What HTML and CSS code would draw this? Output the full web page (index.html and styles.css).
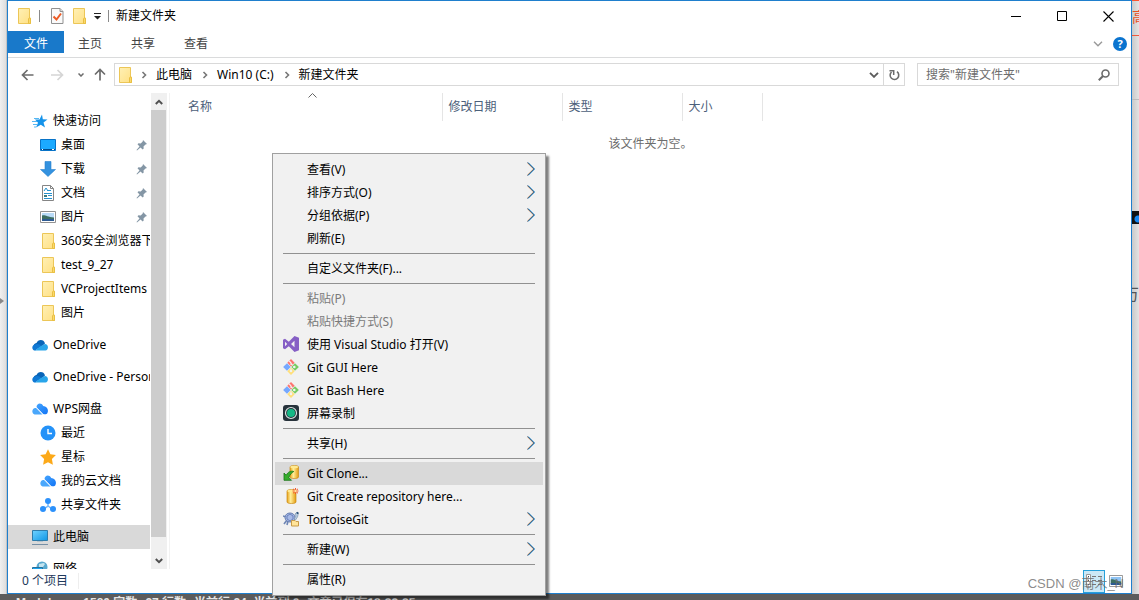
FILE: index.html
```html
<!DOCTYPE html>
<html lang="zh-CN">
<head>
<meta charset="utf-8">
<title>新建文件夹</title>
<link rel="stylesheet" href="styles.css">
</head>
<body>
<svg class="defs" aria-hidden="true">
  <defs>
    <linearGradient id="gf" x1="0" y1="0" x2="1" y2="1"><stop offset="0" stop-color="#fff0b5"/><stop offset="1" stop-color="#ffe083"/></linearGradient>
    <linearGradient id="gs" x1="0" y1="0" x2="1" y2="1"><stop offset="0" stop-color="#6fd2ff"/><stop offset="1" stop-color="#0e97e6"/></linearGradient>
    <linearGradient id="gw" x1="0" y1="0" x2="1" y2="1"><stop offset="0" stop-color="#45a5ff"/><stop offset="1" stop-color="#1173f5"/></linearGradient>
    <linearGradient id="gy" x1="0" y1="0" x2="1" y2="0"><stop offset="0" stop-color="#e8a21a"/><stop offset=".4" stop-color="#ffee9a"/><stop offset="1" stop-color="#e49b10"/></linearGradient>
    <symbol id="folder" viewBox="0 0 16 16"><path d="M2.500.5h11v9.500h1v5.500h-12z" fill="url(#gf)" stroke="#ecc657"/><path d="M12.500 15V11l1-1.500 1 1.500v4.500h-2z" fill="#fbd96b" stroke="#e9bf43"/></symbol>
    <symbol id="pin" viewBox="0 0 12 12"><path d="M7 1l4 4-1.500.5-2 2 .2 2-1 1-2.200-2L1 11.500l-.5-.5 3-3.500-2-2.200 1-1.100 2.200.2 2-2z" fill="#8496a5"/></symbol>
    <symbol id="cloud" viewBox="0 0 16 12"><path d="M3 10C0 8 2 4 4.500 4 6 0 12 0 13 4.500L9 8z" fill="#0864b8"/><path d="M3.500 11.500C-1 11.500-.5 5.500 3.500 5.500 5 4.500 8 5.200 9 7l-5 4z" fill="#0f78d4"/><path d="M3 11.500C5 10 8 7 10 6.500c1-.5 3-2.500 4.500-1 2.500 1.500 1.500 6-1 6z" fill="#28a5ea"/></symbol>
    <symbol id="wps" viewBox="0 0 16 12"><path d="M4.500 4C4.800.5 9-1 11.200 3c3.800.3 6 4 4 7.500-2 1.500-4 .8-5.200-.5L5.500 5.200z" fill="url(#gw)"/><path d="M1 10.500C-.8 8 1.200 4.300 4 5c1.500.4 2.500 2.500 6.500 6.500H2.500z" fill="#4aa7fb"/><path d="M4.300 4.700l6 6" stroke="#fff" stroke-width=".8"/></symbol>
    <symbol id="sub" viewBox="0 0 8 14"><path d="M0 .5l6.500 6.500L0 13.500" fill="none" stroke="#c98a55" stroke-width=".8"/><path d="M1.200.5L7.700 7l-6.500 6.500" fill="none" stroke="#3a9ee0"/><path d="M.6.5L7.100 7 .6 13.500" fill="none" stroke="#1d3f66" stroke-width=".7"/></symbol>
    <symbol id="git" viewBox="0 0 16 16"><path d="M8 0l3.700 3.700L8 7.400 4.300 3.700z" fill="#ff7470"/><path d="M4 4.300L7.700 8 4 11.700.1 8z" fill="#75a8ff"/><path d="M12 4.300L15.900 8 12 11.700 8.300 8z" fill="#76cc63"/><path d="M8 8.600l3.700 3.700L8 16l-3.700-3.700z" fill="#ffdf79"/><path d="M6.200 1.800L8 4v2M8 4.500l1.500 1.500M8 9.500v2" fill="none" stroke="#f1f1f1" stroke-width="1.200"/><circle cx="11.300" cy="8" r="1.300" fill="#f1f1f1"/><circle cx="8" cy="12" r="1.300" fill="#f1f1f1"/></symbol>
    <symbol id="crumb" viewBox="0 0 6 8"><path d="M1.500 1l3 3-3 3" fill="none" stroke="#777" stroke-width="1.600"/></symbol>
    <symbol id="down" viewBox="0 0 10 6"><path d="M1 .8l4 4 4-4" fill="none" stroke="currentColor" stroke-width="1.900"/></symbol>
    <symbol id="photo" viewBox="0 0 16 12"><path d="M.5.5h15v11H.5z" fill="#fff" stroke="#929292"/><path d="M2 2h12v8H2z" fill="#8fc4f5"/><path d="M2 4.500c3-1 5 1.500 12 2V9H2z" fill="#3c6e62"/><path d="M2 8h12v2H2z" fill="#2d5a93"/></symbol>
  </defs>
</svg>

<div class="desktop">
  <div class="edge-left"><svg width="4" height="6"><path d="M0 0l4 3-4 3z" fill="#888"/></svg></div>

  <main class="window">
    <header class="titlebar">
      <svg class="i16"><use href="#folder"/></svg>
      <span class="bar"></span>
      <button class="plain prop" aria-label="属性"><svg width="13" height="16" viewBox="0 0 13 16"><path d="M.5.500h8.500l3 3v12H.5z" fill="#fafafa" stroke="#919191"/><path d="M9 .5v3h3" fill="#ddd" stroke="#919191"/><path d="M2.500 8.500l3 3 4.500-6" fill="none" stroke="#ec5b25" stroke-width="2"/></svg></button>
      <button class="plain" aria-label="新建文件夹"><svg class="i16"><use href="#folder"/></svg></button>
      <button class="plain" aria-label="自定义快速访问工具栏"><svg width="7" height="7"><path d="M0 0h7v1H0zM0 3h7L3.500 6.500z" fill="#222"/></svg></button>
      <span class="bar"></span>
      <h1 class="title">新建文件夹</h1>
      <div class="controls">
        <button aria-label="最小化"><svg width="11" height="11"><path d="M0 5.500h10" stroke="#000"/></svg></button>
        <button aria-label="最大化"><svg width="11" height="11"><path d="M.5.5h9v9h-9z" fill="none" stroke="#000"/></svg></button>
        <button aria-label="关闭"><svg width="11" height="11"><path d="M.5.5l10 10M10.500.5l-10 10" stroke="#000" stroke-width="1.100"/></svg></button>
      </div>
    </header>

    <nav class="tabs">
      <button class="file">文件</button>
      <button>主页</button>
      <button>共享</button>
      <button>查看</button>
      <span class="tab-tools">
        <button class="plain fold" aria-label="展开功能区"><svg width="10" height="6"><path d="M1 .8l4 4 4-4" fill="none" stroke="#999" stroke-width="1.400"/></svg></button>
        <button class="help" aria-label="帮助">?</button>
      </span>
    </nav>

    <div class="navbar">
      <div class="arrows">
        <button class="plain" aria-label="后退"><svg width="13" height="12"><path d="M12.500 6H1.500M6.500 1l-5 5 5 5" fill="none" stroke="#6c6c6c" stroke-width="1.700"/></svg></button>
        <button class="plain" aria-label="前进"><svg width="13" height="12"><path d="M0 6h11.500M6.500 1l5 5-5 5" fill="none" stroke="#d5d5d5" stroke-width="1.700"/></svg></button>
        <button class="plain small" aria-label="最近浏览的位置"><svg width="6" height="4"><path d="M.5.5L3 3 5.500.5" fill="none" stroke="#6c6c6c" stroke-width="1.500"/></svg></button>
        <button class="plain" aria-label="上移"><svg width="12" height="13"><path d="M6 12.500V1.500M1 6.500l5-5 5 5" fill="none" stroke="#6c6c6c" stroke-width="1.700"/></svg></button>
      </div>
      <div class="address">
        <svg class="i16"><use href="#folder"/></svg>
        <svg class="crumb first"><use href="#crumb"/></svg>
        <button class="plain">此电脑</button>
        <svg class="crumb"><use href="#crumb"/></svg>
        <button class="plain">Win10 (C:)</button>
        <svg class="crumb"><use href="#crumb"/></svg>
        <button class="plain">新建文件夹</button>
        <button class="plain drop" aria-label="历史记录"><svg width="10" height="6"><use href="#down"/></svg></button>
        <button class="plain refresh" aria-label="刷新"><svg width="11" height="12"><path d="M2.500 3a4.300 4.300 0 1 0 5.500-.3" fill="none" stroke="#6b6b6b" stroke-width="1.600"/><path d="M.5 1.800h4.200V6" fill="none" stroke="#6b6b6b" stroke-width="1.500"/></svg></button>
      </div>
      <form class="search">
        <input type="text" aria-label="搜索" placeholder='搜索"新建文件夹"'>
        <button type="button" class="plain" aria-label="搜索"><svg width="12" height="12"><circle cx="7.500" cy="4.500" r="3.500" fill="none" stroke="#6b6b6b" stroke-width="1.600"/><path d="M5 7L.8 11.200" stroke="#6b6b6b" stroke-width="2"/></svg></button>
      </form>
    </div>

    <div class="content">
      <aside class="sidebar">
        <ul class="tree">
          <li><svg class="i16 quick" viewBox="0 0 16 16"><path d="M10 1.500l.8 4.700 4.700.3-4 3 1.500 5-4.200-2.700L4 14.500l2-4.800L3 6.500h4.500z" fill="#1593ea"/><path d="M2 5.500h5M0 8.500h5M1 11.500h4M2 14h2" stroke="#55b7f3"/></svg><a href="#">快速访问</a></li>
          <li class="sub"><svg class="i16" viewBox="0 0 16 16"><path d="M.5 2.500h15v11H.5z" fill="#1caaff" stroke="#0873c7"/><path d="M1 12.500h14" stroke="#004c8c"/><path d="M2 12.500h1M12 12.500h2" stroke="#fff"/></svg><a href="#">桌面</a><svg class="pin"><use href="#pin"/></svg></li>
          <li class="sub"><svg class="i16" viewBox="0 0 16 16"><path d="M5 .5h6v8h4.500L8 15.500.5 8.500H5z" fill="#3492df" stroke="#2582cf" stroke-width=".6"/></svg><a href="#">下载</a><svg class="pin"><use href="#pin"/></svg></li>
          <li class="sub"><svg class="i16" viewBox="0 0 16 16"><path d="M2.500.5h8l3 3v12h-11z" fill="#fff" stroke="#858585"/><path d="M10.500.5v3h3" fill="none" stroke="#858585"/><path d="M4 6l2-3 2 3M7 5.500h4M4 8.500h8M8 10.500h4M4 13.500h8" fill="none" stroke="#2792ce"/><path d="M4 10h3v2H4z" fill="#397b80"/></svg><a href="#">文档</a><svg class="pin"><use href="#pin"/></svg></li>
          <li class="sub"><svg class="i16" viewBox="0 -2 16 16"><path d="M.5.5h15v11H.5z" fill="#fff" stroke="#929292"/><path d="M2 2h12v8H2z" fill="#b9dbf8"/><path d="M2 4.500c3-1 5 1.500 12 2V9H2z" fill="#3c6e62"/><path d="M2 8h12v2H2z" fill="#2d5a93"/></svg><a href="#">图片</a><svg class="pin"><use href="#pin"/></svg></li>
          <li class="sub"><svg class="i16"><use href="#folder"/></svg><a href="#">360安全浏览器下载</a></li>
          <li class="sub"><svg class="i16"><use href="#folder"/></svg><a href="#">test_9_27</a></li>
          <li class="sub"><svg class="i16"><use href="#folder"/></svg><a href="#">VCProjectItems</a></li>
          <li class="sub"><svg class="i16"><use href="#folder"/></svg><a href="#">图片</a></li>
          <li class="root"><svg class="cloud"><use href="#cloud"/></svg><a href="#">OneDrive</a></li>
          <li class="root"><svg class="cloud"><use href="#cloud"/></svg><a href="#">OneDrive - Personal</a></li>
          <li class="root"><svg class="cloud"><use href="#wps"/></svg><a href="#">WPS网盘</a></li>
          <li class="sub"><svg class="i16" viewBox="0 0 16 16"><circle cx="8" cy="8" r="7.500" fill="#2492f8"/><path d="M8 4v4.500h4" fill="none" stroke="#fff" stroke-width="1.400"/></svg><a href="#">最近</a></li>
          <li class="sub"><svg class="i16" viewBox="0 0 16 16"><path d="M8 .3l2.400 5 5.500.8-4 4 1 5.600L8 13.200l-4.900 2.500 1-5.600-4-4 5.500-.8z" fill="#fca919"/></svg><a href="#">星标</a></li>
          <li class="sub"><svg class="cloud"><use href="#wps"/></svg><a href="#">我的云文档</a></li>
          <li class="sub"><svg class="i16" viewBox="0 0 16 16"><path d="M8 4v5l-5 3.500M8 9l5 3.500" fill="none" stroke="#76b9fb" stroke-width="1.500"/><circle cx="8" cy="4" r="3" fill="#2c91fb"/><circle cx="3" cy="12" r="3" fill="#2c91fb"/><circle cx="13" cy="12" r="3" fill="#2c91fb"/></svg><a href="#">共享文件夹</a></li>
          <li class="root selected"><svg class="i16" viewBox="0 0 16 16"><path d="M.5 1.500h15v10H.5z" fill="url(#gs)" stroke="#2e7cab"/><path d="M5 12.500h6" stroke="#b5c4ce"/><path d="M0 15.500h16" stroke="#768fa5"/></svg><a href="#">此电脑</a></li>
          <li class="root"><svg class="i16" viewBox="0 0 16 16"><circle cx="10" cy="6" r="5.500" fill="#5aa9cf"/><path d="M7 3c3 0 4-2 6 0l-2 3-4 1z" fill="#c4e4ef"/><path d="M.5 6.500h10v6H.5z" fill="#1ca3ed" stroke="#27709b"/></svg><a href="#">网络</a></li>
        </ul>
        <div class="scroll">
          <button class="plain" aria-label="向上滚动"><svg width="8" height="6"><path d="M.8 5L4 1.800 7.200 5" fill="none" stroke="#505050" stroke-width="2"/></svg></button>
          <span class="thumb"></span>
          <button class="plain" aria-label="向下滚动"><svg width="8" height="6"><path d="M.8 1L4 4.200 7.200 1" fill="none" stroke="#505050" stroke-width="2"/></svg></button>
        </div>
      </aside>

      <section class="files">
        <table class="list">
          <thead>
            <tr>
              <th class="name">名称<svg class="sort" width="9" height="5"><path d="M.5 4.500l4-4 4 4" fill="none" stroke="#666"/></svg></th>
              <th class="date">修改日期</th>
              <th class="type">类型</th>
              <th class="size">大小</th>
              <th class="rest"></th>
            </tr>
          </thead>
          <tbody><tr><td colspan="5">该文件夹为空。</td></tr></tbody>
        </table>
      </section>
    </div>

    <footer class="status">
      <span class="count">0 个项目</span>
      <button class="view on" aria-label="详细信息"><svg width="16" height="14"><path d="M.5.500h4v13h-4z" fill="#fff" stroke="#999"/><path d="M2 2.500h1M2 6.500h1M2 10.500h1" stroke="#444"/><path d="M6 2.500h4m2 0h4M6 6.500h4m2 0h4M6 10.500h4m2 0h4" stroke="#777"/></svg></button>
      <button class="view" aria-label="大图标"><svg width="14" height="12" viewBox="0 0 16 12" preserveAspectRatio="none"><use href="#photo"/></svg></button>
    </footer>
  </main>

  <div class="edge-right">
    <span class="er-text">高</span>
    <span class="er-tools"></span>
    <span class="er-page"></span>
    <span class="er-black"></span>
    <span class="er-char">万</span>
  </div>

  <div class="editor-bar"><span>Markdown</span><span>1580 字数</span><span>27 行数</span><span>当前行 24, 当前列 0</span><span>文章已保存18:39:25</span></div>
</div>

<div class="menu" role="menu">
  <button role="menuitem">查看(V)<svg class="arrow"><use href="#sub"/></svg></button>
  <button role="menuitem">排序方式(O)<svg class="arrow"><use href="#sub"/></svg></button>
  <button role="menuitem">分组依据(P)<svg class="arrow"><use href="#sub"/></svg></button>
  <button role="menuitem">刷新(E)</button>
  <hr>
  <button role="menuitem">自定义文件夹(F)...</button>
  <hr>
  <button role="menuitem" disabled>粘贴(P)</button>
  <button role="menuitem" disabled>粘贴快捷方式(S)</button>
  <button role="menuitem"><svg class="mi" viewBox="0 0 16 16"><path d="M11.500 0L16 1.700v12.600L11.500 16 5.800 10.300 2 13.300 0 12.300V3.700l2-1 3.800 3zM11.500 4.800L8 8l3.500 3.200zM2 5.800v4.400L4.200 8z" fill="#865fc5" fill-rule="evenodd"/></svg>使用 Visual Studio 打开(V)</button>
  <button role="menuitem"><svg class="mi"><use href="#git"/></svg>Git GUI Here</button>
  <button role="menuitem"><svg class="mi"><use href="#git"/></svg>Git Bash Here</button>
  <button role="menuitem"><svg class="mi" viewBox="0 0 16 16"><rect width="16" height="16" rx="3" fill="#27323b"/><circle cx="8" cy="8" r="5.500" fill="none" stroke="#d8e7e3" stroke-width="1.200"/><circle cx="8" cy="8" r="4" fill="#15b886"/></svg>屏幕录制</button>
  <hr>
  <button role="menuitem">共享(H)<svg class="arrow"><use href="#sub"/></svg></button>
  <hr>
  <button role="menuitem" class="hot"><svg class="mi" viewBox="0 0 16 16"><path d="M7 2c0-2 8.500-2 8.500 0v10c0 2-8.500 2-8.500 0z" fill="url(#gy)" stroke="#c88a15" stroke-width=".7"/><ellipse cx="11.200" cy="2" rx="4" ry="1.300" fill="#ffe991"/><path d="M1 15.300V8l2.200 2.200C5 7 7.500 5.500 10.800 6.500 8.500 7.800 7 9.500 5.800 12.500L8.500 15.300z" fill="#35ad2c" stroke="#167315" stroke-width=".8"/></svg>Git Clone...</button>
  <button role="menuitem"><svg class="mi" viewBox="0 0 16 16"><path d="M4 3c0-2 9-2 9 0v11c0 2-9 2-9 0z" fill="url(#gy)" stroke="#c88a15" stroke-width=".7"/><ellipse cx="8.500" cy="3" rx="4.200" ry="1.300" fill="#ffe991"/><path d="M12.500 0v6M10 .8l5 4.500M10 5.300l5-4.500M9.500 3h6" stroke="#f0552b"/><circle cx="12.500" cy="3" r="1.200" fill="#ffe4a0"/></svg>Git Create repository here...</button>
  <button role="menuitem"><svg class="mi" viewBox="0 0 16 16"><path d="M4 9L1 13M5 10l-1 4M3 6L0 5" stroke="#6e86b5" stroke-width="1.600"/><ellipse cx="7" cy="6.500" rx="5" ry="4.500" fill="#a7b9e6" stroke="#647cae"/><path d="M4 5l3-2 3 2v3L7 10 4 8z" fill="none" stroke="#6b83bd"/><path d="M11 8l2-3-1-2 2-2 1.500 1-1 4-2 3z" fill="#b9cee3" stroke="#7189a4" stroke-width=".6"/><circle cx="14.500" cy="2" r="1" fill="#234b70"/><path d="M8.500 9.500H12l1 1h2.500v4.500h-7z" fill="#ffe49a" stroke="#c79a48"/></svg>TortoiseGit<svg class="arrow"><use href="#sub"/></svg></button>
  <hr>
  <button role="menuitem">新建(W)<svg class="arrow"><use href="#sub"/></svg></button>
  <hr>
  <button role="menuitem">属性(R)</button>
</div>
<div class="watermark">CSDN @南木_N</div>
</body>
</html>
```

FILE: styles.css
```css
* { box-sizing: border-box; }
html, body { height: 100%; margin: 0; overflow: hidden; }
body, button, input {
  font-family: "Noto Sans", "Noto Sans CJK SC", sans-serif;
  font-size: 12px;
  line-height: 16px;
  color: #000;
}
button { border: 0; background: none; padding: 0; margin: 0; white-space: nowrap; }
svg { display: block; flex: none; }
.defs { position: absolute; width: 0; height: 0; }
.plain { display: flex; align-items: center; justify-content: center; }
.i16 { width: 16px; height: 16px; }

.desktop {
  display: grid;
  grid-template: minmax(0, 1fr) 6px / 7px minmax(0, 1fr) 7px;
  height: 100%;
  background: #e6e6e6;
}
.edge-left {
  display: flex;
  align-items: center;
  padding-top: 8px;
  border-right: 1px solid #c4c4c4;
  background: linear-gradient(90deg, #f0f0f0, #dedede);
}

.window {
  display: flex;
  flex-direction: column;
  min-height: 0;
  background: #fff;
  border: 1px solid #1f7fcd;
}

.titlebar { display: flex; align-items: center; gap: 7px; height: 30px; padding-left: 8px; flex: none; }
.bar { width: 1px; height: 12px; background: #8a8a8a; }
.titlebar .prop { margin-left: 4px; }
.title { margin: 0; font-size: 12px; font-weight: normal; }
.controls { display: flex; align-self: stretch; margin-left: auto; }
.controls button { width: 46px; display: flex; align-items: center; justify-content: center; }

.tabs { display: flex; height: 27px; padding-bottom: 4px; border-bottom: 1px solid #dadbdc; flex: none; }
.tabs > button { padding: 3px 14px 0; margin-right: 1px; color: #444; }
.tabs .file { width: 56px; margin-right: 0; background: #1979ca; color: #fff; }
.tab-tools { display: flex; align-items: center; gap: 10px; margin-left: auto; padding: 4px 4px 0 0; }
.help {
  width: 14px; height: 14px;
  border-radius: 50%;
  background: #0b74cf;
  color: #fff;
  font-weight: bold;
  font-size: 11px;
  line-height: 14px;
}

.navbar { display: flex; align-items: center; height: 35px; padding: 0 12px 2px 13px; flex: none; color: #6b6b6b; }
.arrows { display: flex; align-items: center; gap: 17px; width: 93px; }
.arrows .small { margin: 0 -7px 0 -3px; }
.address { display: flex; align-items: center; flex: 1; height: 23px; min-width: 0; padding-left: 2px; border: 1px solid #d9d9d9; }
.crumb { width: 6px; height: 8px; margin: 0 9px 0 10px; }
.crumb.first { margin-left: 8px; }
.address .drop { margin-left: auto; width: 18px; color: #5c5c5c; }
.refresh { width: 21px; align-self: stretch; border-left: 1px solid #d9d9d9; }
.search { display: flex; align-items: center; width: 202px; height: 23px; margin-left: 12px; padding: 0 8px; border: 1px solid #d9d9d9; }
.search input { flex: 1; min-width: 0; padding: 0; border: 0; outline: 0; background: none; }
.search input::placeholder { color: #6d6d6d; opacity: 1; }

.content { display: flex; flex: 1; min-height: 0; }
.sidebar { display: flex; width: 162px; border-right: 1px solid #f2f2f2; flex: none; }
.tree { flex: 1; min-width: 0; margin: 0; padding: 16px 1px 0 0; overflow: hidden; list-style: none; }
.tree li { display: flex; align-items: center; gap: 5px; height: 24px; padding-left: 24px; overflow: hidden; }
.tree li.sub { padding-left: 32px; }
.tree li.root { margin-top: 8px; }
.tree li.selected { background: #d9d9d9; }
.tree a { color: #000; text-decoration: none; white-space: nowrap; }
.cloud { width: 16px; height: 12px; }
.pin { width: 12px; height: 12px; margin-left: auto; margin-right: 2px; }
.scroll { display: flex; flex-direction: column; width: 16px; margin-right: 2px; background: #f0f0f0; }
.scroll button { height: 17px; }
.thumb { flex: 1; margin: 0 1px 15px 0; background: #cdcdcd; }

.files { flex: 1; min-width: 0; }
.list { width: 100%; border-collapse: collapse; table-layout: fixed; }
.list th {
  height: 28px;
  padding: 0 6px;
  border-right: 1px solid #e5e5e5;
  color: #4c607a;
  font-weight: normal;
  text-align: left;
}
.list .name { position: relative; width: 272px; padding-left: 18px; }
.list .sort { position: absolute; left: 138px; top: 0; }
.list .date, .list .type { width: 120px; }
.list .size { width: 80px; }
.list .rest { border: 0; }
.list td { padding: 15px 0; color: #6d6d6d; text-align: center; }

.status { display: flex; align-items: center; height: 24px; padding: 0 4px 0 14px; flex: none; }
.count { color: #1e395b; padding-right: 10px; border-right: 1px solid #eee; margin-right: auto; }
.view { display: flex; align-items: center; justify-content: center; width: 22px; height: 23px; }
.view.on { border: 1px solid #26a0da; background: #cbe8f6; }

.edge-right {
  display: flex;
  flex-direction: column;
  overflow: hidden;
  border-top: 1px solid #fc5531;
  background: linear-gradient(90deg, #c9c9c9, #e3e3e3);
}
.er-text { height: 35px; border-bottom: 1px solid #ee5a3c; color: #e8501f; font-size: 14px; line-height: 32px; }
.er-tools { height: 64px; border-bottom: 1px solid #bcbcbc; }
.er-page { height: 111px; }
.er-black { height: 13px; background: radial-gradient(circle at 6px 8px, #1687f2 0 3px, #111 4px); }
.er-char { margin-top: 60px; font-size: 16px; line-height: 20px; color: #555; direction: rtl; }

.editor-bar {
  grid-column: 1 / -1;
  display: flex;
  gap: 8px;
  overflow: hidden;
  padding-left: 16px;
  background: #5c5c5c;
  color: #e6e6e6;
  font-family: "Liberation Sans", "Noto Sans CJK SC", sans-serif;
  font-weight: bold;
  line-height: 18px;
  white-space: nowrap;
}

.menu {
  position: absolute;
  left: 272px;
  top: 153px;
  width: 274px;
  padding: 4px 2px;
  background: #f1f1f1;
  border: 1px solid #a0a0a0;
  box-shadow: 3px 3px 2px rgba(0, 0, 0, .5);
}
.menu button { position: relative; display: flex; align-items: center; width: 100%; height: 23px; padding: 0 8px 0 32px; }
.menu button:disabled { color: #7a7a7a; }
.menu .hot { background: #d9d9d9; }
.menu hr { height: 1px; margin: 3px 8px; border: 0; background: #919191; }
.mi { position: absolute; left: 8px; top: 3px; width: 16px; height: 16px; }
.arrow { width: 8px; height: 14px; margin: 0 0 2px auto; }

.watermark {
  position: absolute;
  right: 15px;
  bottom: 6px;
  color: rgba(110, 110, 110, .8);
  font-family: "Liberation Sans", "Noto Sans CJK SC", sans-serif;
  font-size: 13px;
  line-height: 20px;
}
```
